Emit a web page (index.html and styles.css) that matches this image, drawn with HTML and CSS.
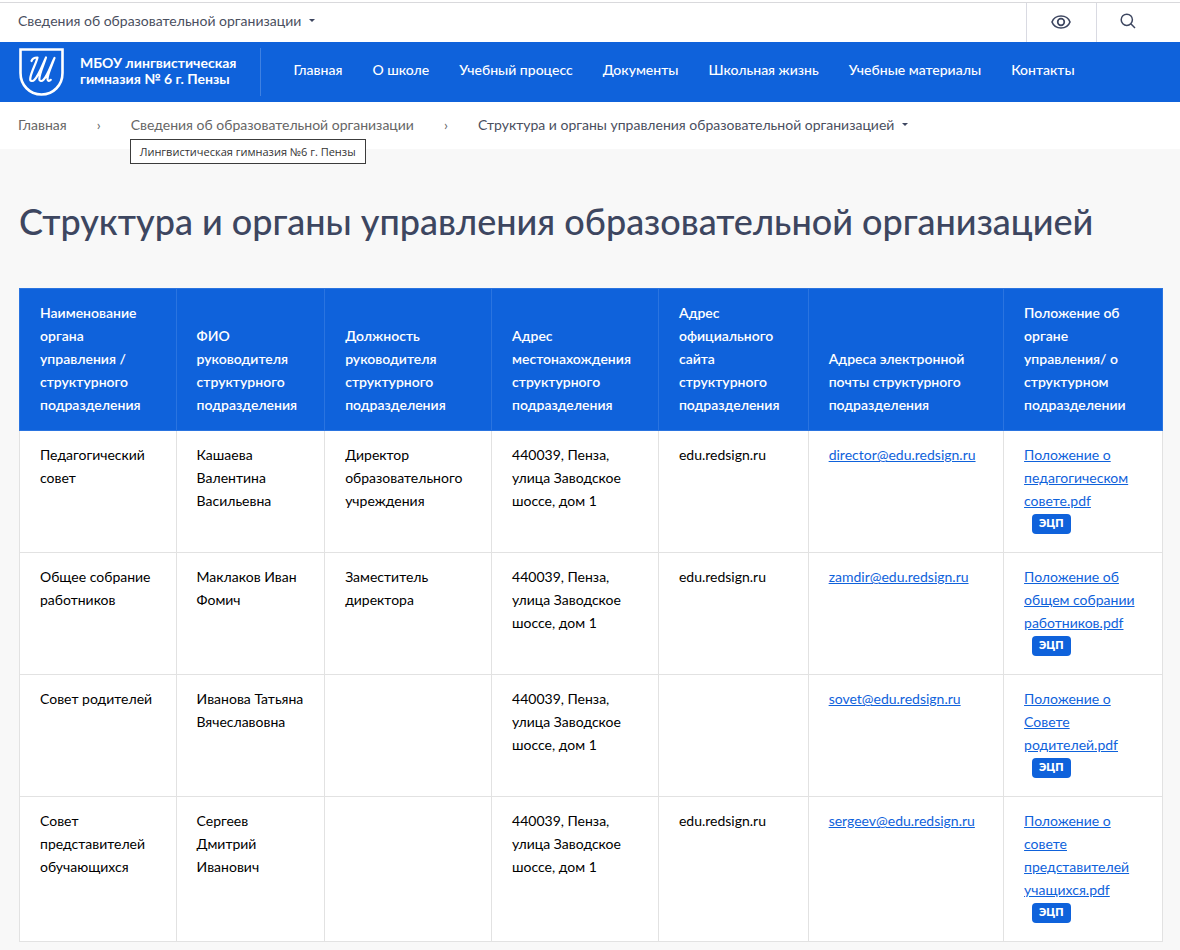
FILE: index.html
```
<!DOCTYPE html>
<html lang="ru">
<head>
    <meta charset="UTF-8">
    <meta name="viewport" content="width=device-width, initial-scale=1.0">
    <title>Структура и органы управления образовательной организацией</title>
    <link rel="stylesheet" href="styles.css">
</head>
<body>
    <div class="topbar">
        <a href="#" class="topbar-link">Сведения об образовательной организации <span class="caret"></span></a>
        <div class="topbar-buttons">
            <button type="button" class="btn-eye" aria-label="Версия для слабовидящих">
                <svg width="20" height="14" viewBox="0 0 20 14" fill="none" stroke="#3d4660">
                    <path d="M1 7C2.500 3 6 1 10 1s7.500 2 9 6c-1.500 4-5 6-9 6S2.500 11 1 7z" stroke-width="1.600"/>
                    <circle cx="10" cy="7" r="3.300" stroke-width="1.700"/>
                </svg>
            </button>
            <button type="button" class="btn-search" aria-label="Поиск">
                <svg width="16" height="16" viewBox="0 0 16 16" fill="none" stroke="#3d4660" stroke-width="1.5">
                    <circle cx="6.8" cy="6.8" r="5.6"/>
                    <path d="M10.8 10.8L15 15"/>
                </svg>
            </button>
        </div>
    </div>

    <header class="header">
        <a href="#" class="logo">
            <svg width="45" height="48" viewBox="0 0 45 48" fill="none" stroke="#fff" stroke-linecap="round" stroke-linejoin="round">
                <path d="M1.5 1.5h42v23.5c0 12-9 21.5-21 21.5S1.5 37 1.5 25z" stroke-width="2.6" stroke-linejoin="miter"/>
                <path d="M12.5 13c1-2.500 3.500-3.600 6-3.500C17 16 11.500 25 11.200 31c-.1 2.400 2.600 2.600 4.300.8C20 27 23.500 17 27 9.500C25 16 20.500 25 20.300 31c0 2.400 2.500 2.600 4.200.8C29 27 32 17 35.500 10C33 17 28.500 26 28.500 31c0 2.300 2 2.300 3.300.8" stroke-width="2.200"/>
            </svg>
            <span class="logo-text">МБОУ лингвистическая<br>гимназия № 6 г. Пензы</span>
        </a>
        <nav class="menu">
            <a href="#">Главная</a>
            <a href="#">О школе</a>
            <a href="#">Учебный процесс</a>
            <a href="#">Документы</a>
            <a href="#">Школьная жизнь</a>
            <a href="#">Учебные материалы</a>
            <a href="#">Контакты</a>
        </nav>
    </header>

    <nav class="breadcrumbs">
        <a href="#">Главная</a>
        <span class="sep">›</span>
        <span class="crumb">
            <a href="#">Сведения об образовательной организации</a>
            <span class="tooltip">Лингвистическая гимназия №6 г. Пензы</span>
        </span>
        <span class="sep">›</span>
        <a href="#" class="current">Структура и органы управления образовательной организацией <span class="caret"></span></a>
    </nav>

    <main class="content">
        <h1>Структура и органы управления образовательной организацией</h1>
        <table>
            <colgroup>
                <col class="col-name">
                <col class="col-fio">
                <col class="col-post">
                <col class="col-address">
                <col class="col-site">
                <col class="col-email">
                <col class="col-doc">
            </colgroup>
            <thead>
                <tr>
                    <th>Наименование органа управления / структурного подразделения</th>
                    <th>ФИО руководителя структурного подразделения</th>
                    <th>Должность руководителя структурного подразделения</th>
                    <th>Адрес местонахождения структурного подразделения</th>
                    <th>Адрес официального сайта структурного подразделения</th>
                    <th>Адреса электронной почты структурного подразделения</th>
                    <th>Положение об органе управления/ о структурном подразделении</th>
                </tr>
            </thead>
            <tbody>
                <tr>
                    <td>Педагогический совет</td>
                    <td>Кашаева Валентина Васильевна</td>
                    <td>Директор образовательного учреждения</td>
                    <td>440039, Пенза, улица Заводское шоссе, дом 1</td>
                    <td>edu.redsign.ru</td>
                    <td><a href="#">director@edu.redsign.ru</a></td>
                    <td><a href="#">Положение о педагогическом совете.pdf</a><div class="sign"><span class="badge">ЭЦП</span></div></td>
                </tr>
                <tr>
                    <td>Общее собрание работников</td>
                    <td>Маклаков Иван Фомич</td>
                    <td>Заместитель директора</td>
                    <td>440039, Пенза, улица Заводское шоссе, дом 1</td>
                    <td>edu.redsign.ru</td>
                    <td><a href="#">zamdir@edu.redsign.ru</a></td>
                    <td><a href="#">Положение об общем собрании работников.pdf</a><div class="sign"><span class="badge">ЭЦП</span></div></td>
                </tr>
                <tr>
                    <td>Совет родителей</td>
                    <td>Иванова Татьяна Вячеславовна</td>
                    <td></td>
                    <td>440039, Пенза, улица Заводское шоссе, дом 1</td>
                    <td></td>
                    <td><a href="#">sovet@edu.redsign.ru</a></td>
                    <td><a href="#">Положение о Совете родителей.pdf</a><div class="sign"><span class="badge">ЭЦП</span></div></td>
                </tr>
                <tr>
                    <td>Совет представителей обучающихся</td>
                    <td>Сергеев Дмитрий Иванович</td>
                    <td></td>
                    <td>440039, Пенза, улица Заводское шоссе, дом 1</td>
                    <td>edu.redsign.ru</td>
                    <td><a href="#">sergeev@edu.redsign.ru</a></td>
                    <td><a href="#">Положение о совете представителей учащихся.pdf</a><div class="sign"><span class="badge">ЭЦП</span></div></td>
                </tr>
            </tbody>
        </table>
    </main>
</body>
</html>
```
FILE: styles.css
```
* {
    box-sizing: border-box;
}
body {
    margin: 0;
    padding-top: 2px;
    font-family: Lato, "Open Sans", sans-serif;
    font-size: 14px;
    line-height: 23px;
    color: #000;
    background: #fff;
}
a {
    color: #0f62db;
}
.topbar {
    display: flex;
    justify-content: space-between;
    height: 40px;
    padding-left: 18px;
    border-top: 1px solid #d9d9dc;
}
.topbar-link {
    display: flex;
    align-items: center;
    padding-bottom: 4px;
    color: #4a4f60;
    text-decoration: none;
}
.caret {
    display: inline-block;
    margin-left: 8px;
    border-top: 3px solid #3d4660;
    border-left: 3px solid transparent;
    border-right: 3px solid transparent;
}
.topbar-buttons {
    display: flex;
}
.topbar-buttons button {
    display: flex;
    align-items: center;
    justify-content: center;
    width: 70px;
    padding: 0 1px 2px 0;
    background: none;
    border: none;
    border-left: 1px solid #d9dae2;
    cursor: pointer;
}
.topbar-buttons .btn-search {
    width: 84px;
    padding: 0 21px 3px 0;
}
.header {
    display: flex;
    align-items: center;
    height: 60px;
    padding-left: 19px;
    background: #0f62db;
}
.logo {
    display: flex;
    align-items: center;
    gap: 16px;
    padding-right: 24px;
    border-right: 1px solid #3f81e2;
    color: #fff;
    font-weight: 700;
    line-height: 16px;
    text-decoration: none;
    white-space: nowrap;
}
.logo-text {
    padding-bottom: 2px;
}
.menu {
    display: flex;
    gap: 30px;
    padding: 0 0 5px 32px;
    white-space: nowrap;
}
.menu a {
    color: #fff;
    font-weight: 500;
    text-decoration: none;
}
.breadcrumbs {
    display: flex;
    align-items: center;
    height: 47px;
    padding: 0 0 3px 18px;
    white-space: nowrap;
}
.breadcrumbs a {
    color: #666;
    text-decoration: none;
}
.breadcrumbs .current {
    display: flex;
    align-items: center;
    color: #4a4f60;
}
.sep {
    width: 64px;
    color: #666;
    text-align: center;
}
.crumb {
    position: relative;
}
.tooltip {
    position: absolute;
    top: 26px;
    left: -1px;
    padding: 0 9px;
    background: #fff;
    border: 1px solid #3c3c3c;
    color: #333;
    font-family: "Open Sans", "Noto Sans", sans-serif;
    font-size: 11px;
}
.content {
    padding: 48px 17px 8px 19px;
    background: #f8f8f8;
}
h1 {
    margin: 0 0 43px;
    color: #3d4660;
    font-size: 36px;
    font-weight: 500;
    line-height: 48px;
}
table {
    width: 100%;
    table-layout: fixed;
    border-collapse: collapse;
    background: #fff;
}
.col-name {
    width: 13.7%;
}
.col-fio {
    width: 13%;
}
.col-post,
.col-address {
    width: 14.6%;
}
.col-site {
    width: 13.1%;
}
.col-email {
    width: 17.1%;
}
.col-doc {
    width: 13.9%;
}
th {
    padding: 12px 20px 14px;
    background: #0f62db;
    border: 1px solid #2a74e0;
    color: #fff;
    font-weight: 600;
    text-align: left;
    vertical-align: bottom;
}
td {
    padding: 12px 18px 17px 20px;
    border: 1px solid #e2e2e2;
    vertical-align: top;
}
.sign {
    display: flex;
    height: 23px;
    padding: 2px 0 0 8px;
}
.badge {
    height: 20px;
    padding: 0 7px;
    background: #0f62db;
    border-radius: 4px;
    color: #fff;
    font-size: 11px;
    font-weight: 800;
    line-height: 17px;
}
```
